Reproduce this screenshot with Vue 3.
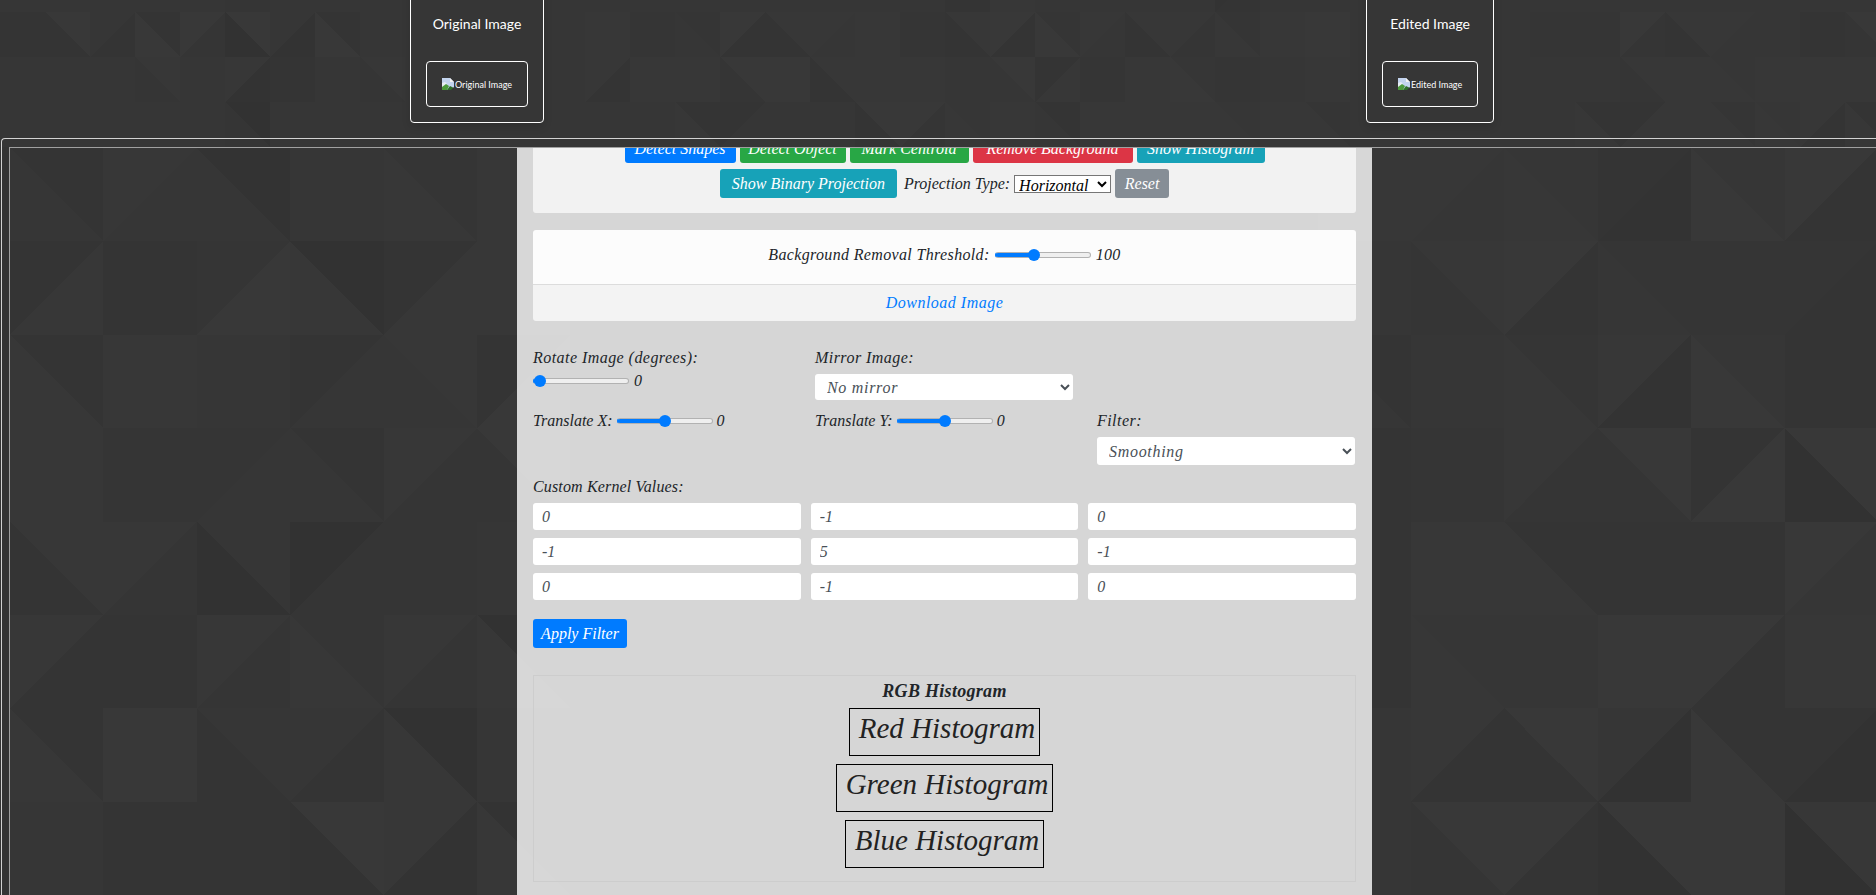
<script setup>
// background tiles: b = "\" diagonal (upper right, lower left), f = "/" diagonal (upper left, lower right), s = solid
const topRows = [
  's36 s36 s36 s36 s36 s34 s36 s36 s36 s36 s36 s36 s36 s36 s36 s36 s36 s36 s36 s36 s36 s33 s37 s36 s36 s36 s36 f3132 s36 s36 s36 s36 s36 s36 s36 s36 s36 s36 s36 s36 s36 s36',
  's33 b3a32 f3633 b3339 f3935 b392f f3631 b323a s36 s36 s36 s36 s36 s38 s34 b3536 f3a33 b3833 f3836 s37 s35 b3833 f3933 b3439 f3836 b3833 f3734 b3438 s38 s39 s36 s36 s36 s36 s35 s35 f3934 b3832 f3836 s36 s33 b3a35',
  's36 s36 s36 b3835 s36 f3831 s32 s36 b3835 s36 s36 s36 s36 f3833 s37 s38 b3a35 s39 b3833 s38 s38 f3636 b3936 f3338 s35 s37 b363a s34 s36 f3737 s36 s36 s36 s36 s36 s36 b3835 s38 b3638 s37 s37 s37',
  's36 s36 s36 s36 s36 b2f35 s36 s36 s36 s36 s36 s36 s36 s36 s36 b3237 f3336 s36 s36 b3a33 f3a34 b3638 s38 b3236 s37 s37 s37 b3637 f3738 b3437 s36 s36 s36 s36 s36 b3237 f3338 s37 b3538 b3637 f3833 b3338',
]

const mid = 's36 s36 s36 s36 s36 s36 s36 s36'
const innerRows = [
  `b3236 f3736 b3136 f3636 b3437 s37 ${mid} s38 f3836 b3638 f3331 b3639 f3933 s36`,
  `f3337 s33 f3439 b3037 f3338 s37 ${mid} s36 b3834 f3a32 b3536 s35 f3433 s36`,
  `b3337 s37 f3636 f3236 b3836 f3239 ${mid} b3336 s36 b3537 f3731 b363a s33 s33`,
  `s37 s34 f3436 b3236 f3734 b3934 ${mid} s33 s35 f3735 b3935 f3239 b3930 s36`,
  `b3833 f3834 b3630 f3035 s35 s36 ${mid} s32 s38 b3237 f3233 s33 f3a36 s36`,
  `f3733 s33 f3834 b3437 f3735 b3038 ${mid} s33 b3638 s36 s39 f3933 s38 s38`,
  `b3237 s39 b3632 f3633 b3038 s36 ${mid} s36 f3832 b3a32 f3630 b3239 f332f s33`,
  `s36 s33 s32 b3931 f3831 b3137 ${mid} s36 b3a35 f3a32 b3930 s39 b382e s33`,
]

// the shades sit close together, so pull every tile towards the base grey
function shade(hex) {
  const v = Math.round(0x36 + (parseInt(hex, 16) - 0x36) * 0.6)
  return `rgb(${v},${v},${v})`
}

function tiles(rows, size, offX, offY) {
  const out = []
  rows.forEach((row, r) => {
    row.split(' ').forEach((t, c) => {
      const x = offX + c * size
      const y = offY + r * size
      const x2 = x + size
      const y2 = y + size
      const a = shade(t.slice(1, 3))
      const b = shade(t.slice(3, 5) || t.slice(1, 3))
      if (t[0] === 's') {
        out.push({ points: `${x},${y} ${x2},${y} ${x2},${y2} ${x},${y2}`, fill: a })
      } else if (t[0] === 'b') {
        out.push({ points: `${x},${y} ${x2},${y} ${x2},${y2}`, fill: a })
        out.push({ points: `${x},${y} ${x2},${y2} ${x},${y2}`, fill: b })
      } else {
        out.push({ points: `${x},${y} ${x2},${y} ${x},${y2}`, fill: a })
        out.push({ points: `${x2},${y} ${x2},${y2} ${x},${y2}`, fill: b })
      }
    })
  })
  return out
}

const topTiles = tiles(topRows, 45, 0, -33)
const innerTiles = tiles(innerRows, 93.4, 0, 0)

// blue part of a slider track ends under the thumb centre
function fill(value, min, max) {
  const frac = (value - min) / (max - min)
  return { '--p': `${6 + frac * 84}px` }
}

const previews = [
  { title: 'Original Image' },
  { title: 'Edited Image' },
]
const topButtons = [
  { label: 'Detect Shapes', color: 'blue', w: 111 },
  { label: 'Detect Object', color: 'green', w: 106 },
  { label: 'Mark Centroid', color: 'green', w: 119 },
  { label: 'Remove Background', color: 'red', w: 160 },
  { label: 'Show Histogram', color: 'teal', w: 128 },
]
const kernel = [0, -1, 0, -1, 5, -1, 0, -1, 0]
const histograms = ['Red Histogram', 'Green Histogram', 'Blue Histogram']
</script>

<template>
  <div class="page">
    <svg class="bg" width="1876" height="895">
      <rect width="1876" height="895" fill="#343434" />
      <polygon v-for="(t, i) in topTiles" :key="i" :points="t.points" :fill="t.fill" />
    </svg>

    <header class="previews">
      <section v-for="p in previews" :key="p.title" class="preview">
        <h4>{{ p.title }}</h4>
        <div class="thumb">
          <svg class="broken" width="12" height="12" viewBox="0 0 12 12">
            <path d="M0 0h8l4 4v8H0z" fill="#c3d4ee" />
            <path d="M0 0h8l4 4H8V0z" fill="#f2f2f2" />
            <path d="M0 5l3-1 2 2-5 4z" fill="#e8edf5" />
            <path d="M0 12V9l4-3 3 2-2 4z" fill="#4c9a3c" />
            <path d="M5 12l3-4 4 2v2z" fill="#2f6e2a" />
            <path d="M9 12l3-3v3z" fill="#343434" />
          </svg>
          <span>{{ p.title }}</span>
        </div>
      </section>
    </header>

    <div class="frame">
      <div class="inner">
        <svg class="bg" width="1876" height="760">
          <polygon v-for="(t, i) in innerTiles" :key="i" :points="t.points" :fill="t.fill" />
        </svg>

        <main class="panel">
          <div class="tool-card">
            <div class="btn-row">
              <button
                v-for="b in topButtons"
                :key="b.label"
                class="btn"
                :class="b.color"
                :style="{ width: b.w + 'px' }"
              >{{ b.label }}</button>
            </div>
            <div class="btn-row">
              <button class="btn teal binary">Show Binary Projection</button>
              <label class="proj-label">Projection Type:</label>
              <select class="proj-select"><option>Horizontal</option></select>
              <button class="btn gray reset">Reset</button>
            </div>
          </div>

          <div class="threshold-card">
            <div class="threshold-body">
              <label>Background Removal Threshold:</label>
              <input type="range" class="slider" min="0" max="255" value="100" :style="fill(100, 0, 255)" />
              <span>100</span>
            </div>
            <div class="threshold-foot"><a href="#">Download Image</a></div>
          </div>

          <div class="form-grid">
            <div class="field">
              <label>Rotate Image (degrees):</label>
              <div class="slider-line">
                <input type="range" class="slider" min="0" max="360" value="0" :style="fill(0, 0, 360)" />
                <span>0</span>
              </div>
            </div>
            <div class="field">
              <label>Mirror Image:</label>
              <select class="control"><option>No mirror</option></select>
            </div>
            <div class="field"></div>
            <div class="field">
              <div class="slider-line inline">
                <label>Translate X:</label>
                <input type="range" class="slider" min="-100" max="100" value="0" :style="fill(0, -100, 100)" />
                <span>0</span>
              </div>
            </div>
            <div class="field">
              <div class="slider-line inline">
                <label>Translate Y:</label>
                <input type="range" class="slider" min="-100" max="100" value="0" :style="fill(0, -100, 100)" />
                <span>0</span>
              </div>
            </div>
            <div class="field">
              <label>Filter:</label>
              <select class="control"><option>Smoothing</option></select>
            </div>
          </div>

          <label class="kernel-label">Custom Kernel Values:</label>
          <div class="kernel">
            <input v-for="(v, i) in kernel" :key="i" type="text" :value="v" />
          </div>

          <button class="btn blue apply">Apply Filter</button>

          <section class="histograms">
            <h5>RGB Histogram</h5>
            <div v-for="h in histograms" :key="h" class="hist-box">{{ h }}</div>
          </section>
        </main>
      </div>
    </div>
  </div>
</template>

<style scoped>
.page {
  position: relative;
  width: 1876px;
  height: 895px;
  overflow: hidden;
  font-family: "Liberation Serif", serif;
  font-style: italic;
  font-size: 16px;
  color: #212529;
}
.bg {
  position: absolute;
  left: 0;
  top: 0;
  shape-rendering: crispEdges;
}
.previews {
  position: relative;
  display: flex;
  align-items: flex-end;
  gap: 822px;
  height: 138px;
  padding: 0 0 15px 410px;
  box-sizing: border-box;
  overflow: hidden;
}
.preview {
  flex: none;
  height: 143px;
  box-sizing: border-box;
  padding: 0 15px;
  border: 1px solid #fff;
  border-radius: 4px;
  box-shadow: 0 4px 8px rgba(0, 0, 0, 0.12);
  font-family: Lato, sans-serif;
  font-style: normal;
  color: #fff;
}
.preview h4 {
  margin: 31px 0 25px;
  height: 24px;
  font-size: 14px;
  line-height: 24px;
  font-weight: 400;
  text-align: center;
  white-space: nowrap;
}
.thumb {
  display: flex;
  align-items: center;
  justify-content: center;
  height: 46px;
  box-sizing: border-box;
  padding: 0 15px;
  border: 1px solid #fff;
  border-radius: 4px;
  font-size: 9px;
  white-space: nowrap;
}
.broken { flex: none; margin-right: 1px; }
.frame {
  position: relative;
  height: 757px;
  margin-left: 1px;
  box-sizing: border-box;
  padding: 8px 0 0 7px;
  border-top: 1px solid #d2d2d2;
  border-left: 1px solid #d2d2d2;
  border-top-left-radius: 4px;
}
.inner {
  position: relative;
  height: 748px;
  overflow: hidden;
  border-top: 1px solid #a0a0a0;
  border-left: 1px solid #a0a0a0;
}
.panel {
  position: relative;
  width: 855px;
  margin: -29px 0 0 507px;
  box-sizing: border-box;
  padding: 0 16px 40px 16px;
  background: rgba(255, 255, 255, 0.8);
}
.tool-card {
  padding: 15px 0;
  background: #f2f2f2;
  border-radius: 3px;
}
.btn-row {
  display: flex;
  justify-content: center;
  align-items: center;
  gap: 4px;
}
.btn-row + .btn-row { margin-top: 6px; }
.btn {
  height: 29px;
  padding: 0;
  border: 0;
  border-radius: 3px;
  font: italic 16px "Liberation Serif", serif;
  color: #fff;
  white-space: nowrap;
}
.binary { width: 177px; }
.reset { width: 54px; }
.blue { background: #007bff; }
.green { background: #28a745; }
.red { background: #dc3545; }
.teal { background: #17a2b8; }
.gray { background: #868e96; }
.proj-label { margin-left: 3px; white-space: nowrap; }
.proj-select {
  width: 97px;
  height: 18px;
  padding: 0;
  background: #fff;
  font: italic 16px "Liberation Serif", serif;
  color: #000;
}
.threshold-card {
  margin-top: 17px;
  border-radius: 3px;
  overflow: hidden;
}
.threshold-body {
  display: flex;
  justify-content: center;
  align-items: center;
  gap: 5px;
  height: 55px;
  box-sizing: border-box;
  padding-bottom: 5px;
  background: #fcfcfc;
  border-bottom: 1px solid #dcdcdc;
  letter-spacing: 0.35px;
}
.threshold-foot {
  height: 36px;
  line-height: 36px;
  text-align: center;
  background: #f3f3f3;
  letter-spacing: 0.5px;
}
.threshold-foot a { color: #007bff; text-decoration: none; }
.slider {
  flex: none;
  width: 96px;
  height: 16px;
  margin: 0;
  appearance: none;
  background: transparent;
}
.slider::-webkit-slider-runnable-track {
  height: 6px;
  box-sizing: border-box;
  border: 1px solid #b2b2b2;
  border-radius: 3px;
  background: linear-gradient(to right, #007bff var(--p), #efefef var(--p));
  border-left-color: #007bff;
}
.slider::-webkit-slider-thumb {
  appearance: none;
  width: 12px;
  height: 12px;
  margin-top: -4px;
  border-radius: 50%;
  background: #007bff;
}
.form-grid {
  display: grid;
  grid-template-columns: repeat(3, 258px);
  grid-template-rows: 54px 56px;
  column-gap: 24px;
  row-gap: 9px;
  margin-top: 25px;
  letter-spacing: 0.45px;
}
.field { display: flex; flex-direction: column; }
.field > label { line-height: 24px; margin-bottom: 4px; }
.slider-line { display: flex; align-items: center; gap: 5px; height: 24px; margin-top: -5px; }
.slider-line.inline { margin-top: 0; gap: 4px; letter-spacing: 0; }
.control {
  height: 28px;
  padding: 0 8px;
  border: 0;
  border-radius: 3px;
  background: #fff;
  font: italic 16px "Liberation Serif", serif;
  letter-spacing: 0.7px;
  color: #495057;
}
.kernel-label {
  display: block;
  margin-top: 10px;
  line-height: 24px;
  letter-spacing: 0.15px;
}
.kernel {
  display: grid;
  grid-template-columns: repeat(3, 1fr);
  gap: 8px 10px;
  margin-top: 4px;
}
.kernel input {
  min-width: 0;
  height: 27px;
  box-sizing: border-box;
  padding: 0 9px;
  border: 0;
  border-radius: 3px;
  background: #fff;
  font: italic 16px "Liberation Serif", serif;
  color: #495057;
  outline: none;
}
.apply { display: block; width: 94px; margin-top: 19px; }
.histograms {
  display: flex;
  flex-direction: column;
  align-items: center;
  gap: 8px;
  height: 207px;
  box-sizing: border-box;
  margin-top: 27px;
  padding-top: 6px;
  border: 1px solid #cdcdcd;
}
.histograms h5 {
  height: 18px;
  margin: 0;
  font-size: 18px;
  line-height: 18px;
  font-weight: 700;
  letter-spacing: 0.3px;
}
.hist-box {
  height: 48px;
  box-sizing: border-box;
  padding: 0 4px 0 9px;
  border: 1px solid #000;
  font-size: 29px;
  line-height: 38px;
  color: #222;
  white-space: nowrap;
}
</style>
